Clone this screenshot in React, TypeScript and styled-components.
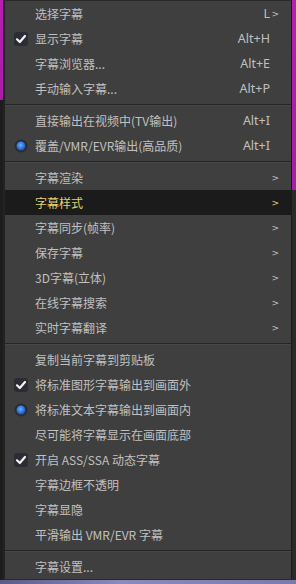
import React from "react";
import styled, { createGlobalStyle } from "styled-components";

type Mark = "check" | "radio";

interface Item {
  label: string;
  shortcut?: string;
  arrow?: boolean;
  mark?: Mark;
  active?: boolean;
}

type Group = Item[];

const groups: Group[] = [
  [
    { label: "选择字幕", shortcut: "L", arrow: true },
    { label: "显示字幕", shortcut: "Alt+H", mark: "check" },
    { label: "字幕浏览器...", shortcut: "Alt+E" },
    { label: "手动输入字幕...", shortcut: "Alt+P" },
  ],
  [
    { label: "直接输出在视频中(TV输出)", shortcut: "Alt+I" },
    { label: "覆盖/VMR/EVR输出(高品质)", shortcut: "Alt+I", mark: "radio" },
  ],
  [
    { label: "字幕渲染", arrow: true },
    { label: "字幕样式", arrow: true, active: true },
    { label: "字幕同步(帧率)", arrow: true },
    { label: "保存字幕", arrow: true },
    { label: "3D字幕(立体)", arrow: true },
    { label: "在线字幕搜索", arrow: true },
    { label: "实时字幕翻译", arrow: true },
  ],
  [
    { label: "复制当前字幕到剪贴板" },
    { label: "将标准图形字幕输出到画面外", mark: "check" },
    { label: "将标准文本字幕输出到画面内", mark: "radio" },
    { label: "尽可能将字幕显示在画面底部" },
    { label: "开启 ASS/SSA 动态字幕", mark: "check" },
    { label: "字幕边框不透明" },
    { label: "字幕显隐" },
    { label: "平滑输出 VMR/EVR 字幕" },
  ],
  [{ label: "字幕设置..." }],
];

const GlobalStyle = createGlobalStyle`
  html, body {
    margin: 0;
    padding: 0;
    background: #1c1c1c;
  }
  body {
    font-family: "Noto Sans", "Noto Sans CJK SC", sans-serif;
  }
`;

const Screen = styled.div`
  width: 296px;
  height: 584px;
  display: flex;
  flex-direction: column;
  overflow: hidden;
  background: #1c1c1c;
`;

const Middle = styled.div`
  display: flex;
  flex: 1;
`;

const Edge = styled.div<{ $w: number; $stop: number; $below: string }>`
  width: ${(p) => p.$w}px;
  flex: none;
  background: linear-gradient(
    to bottom,
    #b51fb3 0,
    #a81ca8 ${(p) => p.$stop}px,
    ${(p) => p.$below} ${(p) => p.$stop}px
  );
`;

const Menu = styled.div`
  flex: 1;
  display: flex;
  flex-direction: column;
  background: #3f3f3f;
  border-left: 2px solid #232323;
  border-right: 1px solid #1b1b1b;
  border-top: 1px solid #2a2a2a;
  border-bottom: 1px solid #2a2a2a;
`;

const Row = styled.div<{ $active?: boolean }>`
  height: 25px;
  display: flex;
  align-items: center;
  padding-right: 12px;
  font-size: 12px;
  color: ${(p) => (p.$active ? "#e3d26c" : "#c0c0c0")};
  background: ${(p) => (p.$active ? "#1b1b1b" : "transparent")};
  white-space: nowrap;
`;

const MarkSlot = styled.div`
  width: 30px;
  flex: none;
  display: flex;
  align-items: center;
  justify-content: center;
  padding-left: 1px;
  box-sizing: border-box;
`;

const Label = styled.span`
  flex: 1;
  font-family: "Noto Sans CJK SC", "Noto Sans", sans-serif;
`;

const Shortcut = styled.span`
  font-family: "Noto Sans", "Noto Sans CJK SC", sans-serif;
  font-size: 12.5px;
`;

const ArrowSlot = styled.span`
  width: 9px;
  flex: none;
  display: flex;
  justify-content: flex-end;
  font-family: "DejaVu Sans", sans-serif;
  font-size: 9px;
`;

const Separator = styled.div`
  height: 7px;
  display: flex;
  align-items: center;
  &::after {
    content: "";
    flex: 1;
    height: 1px;
    background: #262626;
    box-shadow: 0 1px 0 #474747;
  }
`;

const Bottom = styled.div`
  height: 4px;
  flex: none;
  background: linear-gradient(to right, #5b5b8a, #8a89c0 40%, #7a79b0);
`;

function CheckIcon() {
  return (
    <svg width="16" height="16" viewBox="0 0 16 16">
      <rect x="1" y="1" width="14" height="14" rx="3" fill="#2c2c36" />
      <path
        d="M4 8.3 L6.8 11 L12 5"
        fill="none"
        stroke="#f4f4f4"
        strokeWidth="2.2"
        strokeLinecap="round"
        strokeLinejoin="round"
      />
    </svg>
  );
}

function RadioIcon() {
  return (
    <svg width="16" height="16" viewBox="0 0 16 16">
      <defs>
        <radialGradient id="dot" cx="45%" cy="40%" r="60%">
          <stop offset="0%" stopColor="#6fb0ff" />
          <stop offset="60%" stopColor="#2f78e0" />
          <stop offset="100%" stopColor="#1d4fa8" />
        </radialGradient>
      </defs>
      <circle cx="8" cy="8" r="6.5" fill="#2b2b33" />
      <circle cx="8" cy="8" r="4.5" fill="url(#dot)" />
    </svg>
  );
}

function MenuRow({ item }: { item: Item }) {
  return (
    <Row $active={item.active}>
      <MarkSlot>
        {item.mark === "check" && <CheckIcon />}
        {item.mark === "radio" && <RadioIcon />}
      </MarkSlot>
      <Label>{item.label}</Label>
      {item.shortcut && <Shortcut>{item.shortcut}</Shortcut>}
      <ArrowSlot>{item.arrow ? ">" : ""}</ArrowSlot>
    </Row>
  );
}

export default function App() {
  return (
    <>
      <GlobalStyle />
      <Screen>
        <Middle>
          <Edge $w={3} $stop={100} $below="#1d1d1d" />
          <Menu>
            {groups.map((group, gi) => (
              <React.Fragment key={gi}>
                {gi > 0 && <Separator />}
                {group.map((item) => (
                  <MenuRow key={item.label} item={item} />
                ))}
              </React.Fragment>
            ))}
          </Menu>
          <Edge $w={4} $stop={190} $below="#2a2a2a" />
        </Middle>
        <Bottom />
      </Screen>
    </>
  );
}
